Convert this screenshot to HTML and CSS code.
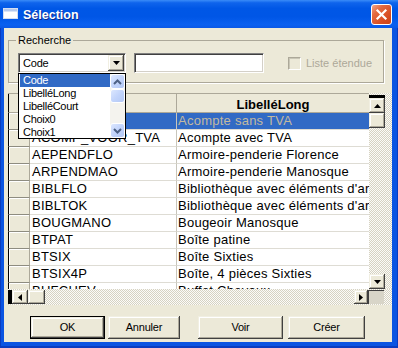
FILE: index.html
```html
<!DOCTYPE html>
<html lang="fr">
<head>
<meta charset="utf-8">
<title>Sélection</title>
<link rel="stylesheet" href="styles.css">
</head>
<body>
<div class="window">
  <div class="titlebar">
    <svg class="app-icon" width="16" height="12" viewBox="0 0 16 12" aria-hidden="true">
      <rect x="0.5" y="0.5" width="14" height="10" fill="#ffffff" stroke="#d4def0"/>
      <rect x="1" y="1" width="13" height="2.5" fill="#b4c9ee"/>
    </svg>
    <span class="title">Sélection</span>
    <span class="close" aria-label="Fermer">
      <svg width="19" height="19" viewBox="0 0 19 19" aria-hidden="true"><path d="M5.5 5.5 L13.5 13.5 M13.5 5.5 L5.5 13.5" stroke="#fff" stroke-width="2.2" stroke-linecap="square"/></svg>
    </span>
  </div>
  <div class="client">
    <fieldset class="group">
      <legend>Recherche</legend>
      <div class="search-row">
        <div class="combo">
          <span class="combo-text">Code</span>
          <span class="combo-btn"><svg width="7" height="4" viewBox="0 0 7 4" aria-hidden="true"><path d="M0 0h7L3.5 4z" fill="#000"/></svg></span>
          <div class="dropdown">
            <ul class="options">
              <li class="sel">Code</li>
              <li>LibelléLong</li>
              <li>LibelléCourt</li>
              <li>Choix0</li>
              <li>Choix1</li>
            </ul>
            <div class="xp-scroll">
              <span class="xp-btn"><svg width="9" height="6" viewBox="0 0 9 6" aria-hidden="true"><path d="M1 5 L4.5 1.5 L8 5" stroke="#4d6185" stroke-width="2" fill="none"/></svg></span>
              <span class="xp-thumb"></span>
              <span class="xp-track"></span>
              <span class="xp-btn"><svg width="9" height="6" viewBox="0 0 9 6" aria-hidden="true"><path d="M1 1 L4.5 4.5 L8 1" stroke="#4d6185" stroke-width="2" fill="none"/></svg></span>
            </div>
          </div>
        </div>
        <div class="field"></div>
        <label class="check"><span class="box"></span>Liste étendue</label>
      </div>
    </fieldset>

    <div class="table-wrap">
      <div class="table">
        <div class="row head">
          <div class="rh"></div>
          <div class="hc">Code</div>
          <div class="hc">LibelléLong</div>
        </div>
        <div class="row sel"><div class="rh"></div><div class="c">ACOMPTE</div><div class="c c2">Acompte sans TVA</div></div>
        <div class="row"><div class="rh"></div><div class="c">ACOMP_VOOR_TVA</div><div class="c c2">Acompte avec TVA</div></div>
        <div class="row"><div class="rh"></div><div class="c">AEPENDFLO</div><div class="c c2">Armoire-penderie Florence</div></div>
        <div class="row"><div class="rh"></div><div class="c">ARPENDMAO</div><div class="c c2">Armoire-penderie Manosque</div></div>
        <div class="row"><div class="rh"></div><div class="c">BIBLFLO</div><div class="c c2">Bibliothèque avec éléments d'armoire</div></div>
        <div class="row"><div class="rh"></div><div class="c">BIBLTOK</div><div class="c c2">Bibliothèque avec éléments d'armoire</div></div>
        <div class="row"><div class="rh"></div><div class="c">BOUGMANO</div><div class="c c2">Bougeoir Manosque</div></div>
        <div class="row"><div class="rh"></div><div class="c">BTPAT</div><div class="c c2">Boîte patine</div></div>
        <div class="row"><div class="rh"></div><div class="c">BTSIX</div><div class="c c2">Boîte Sixties</div></div>
        <div class="row"><div class="rh"></div><div class="c">BTSIX4P</div><div class="c c2">Boîte, 4 pièces Sixties</div></div>
        <div class="row"><div class="rh"></div><div class="c">BUFCHEV</div><div class="c c2">Buffet Chevaux</div></div>
      </div>
      <div class="vscroll">
        <span class="vcap"></span>
        <span class="sb"><svg width="7" height="4" viewBox="0 0 7 4" aria-hidden="true"><path d="M0 4h7L3.5 0z" fill="#000"/></svg></span>
        <span class="sb"></span>
        <span class="vtrack"></span>
        <span class="sb"><svg width="7" height="4" viewBox="0 0 7 4" aria-hidden="true"><path d="M0 0h7L3.5 4z" fill="#000"/></svg></span>
      </div>
      <div class="hscroll">
        <span class="hcap"></span>
        <span class="sb hb"><svg width="4" height="7" viewBox="0 0 4 7" aria-hidden="true"><path d="M4 0v7L0 3.5z" fill="#000"/></svg></span>
        <span class="sb hthumb"></span>
        <span class="htrack"></span>
        <span class="sb hb hr"><svg width="4" height="7" viewBox="0 0 4 7" aria-hidden="true"><path d="M0 0v7L4 3.5z" fill="#000"/></svg></span>
        <span class="corner"></span>
        <span class="filler"></span>
      </div>
    </div>

    <div class="buttons">
      <span class="btn default w-ok">OK</span>
      <span class="btn w-annuler">Annuler</span>
      <span class="btn w-voir">Voir</span>
      <span class="btn w-creer">Créer</span>
    </div>
  </div>
</div>
</body>
</html>
```

FILE: styles.css
```css
* { box-sizing: border-box; }
html, body { margin: 0; padding: 0; background: #fff; }
body { font-family: "Liberation Sans", Arial, sans-serif; color: #000; }

.window {
  width: 398px;
  height: 348px;
  display: flex;
  flex-direction: column;
  background: #0a54e2;
  box-shadow: inset 0 -2px 0 #0a3cc0, inset -1px 0 0 #0a3cc0, inset 1px 0 0 #0a3cc0;
  overflow: hidden;
}

/* Title bar */
.titlebar {
  height: 28px;
  flex: none;
  display: flex;
  align-items: flex-start;
  padding: 0 6px 0 3px;
  background: linear-gradient(to bottom, #3a8cf8 0%, #0f64ec 10%, #0057e6 30%, #0056e6 60%, #0a60f0 88%, #0a58e6 100%);
}
.app-icon { margin-top: 8px; flex: none; }
.title {
  margin-left: 4px;
  margin-top: 8px;
  font-size: 12.5px;
  line-height: 15px;
  font-weight: bold;
  color: #fff;
  text-shadow: 1px 1px 0 #0c2a8e;
}
.close {
  margin-left: auto;
  margin-top: 4px;
  width: 21px;
  height: 21px;
  border: 1px solid #fff;
  border-radius: 3px;
  background: linear-gradient(135deg, #f3a68a 0%, #e46a40 30%, #d84d22 70%, #cc4418 100%);
  display: flex;
  align-items: center;
  justify-content: center;
}

/* Client area */
.client {
  flex: 1;
  margin: 0 6px 6px 4px;
  padding-left: 4px;
  background: #ece9d8;
  display: flex;
  flex-direction: column;
  overflow: hidden;
}

/* Group box */
.group {
  margin: 6px 8px 0 0;
  padding: 0;
  min-width: 0;
  border: 1px solid #aca899;
  box-shadow: 1px 1px 0 #fff;
}
.group legend {
  margin-left: 7px;
  padding: 0 2px;
  font-size: 11px;
  line-height: 13px;
}
.search-row {
  display: flex;
  align-items: center;
  padding: 6px 9px 9px 9px;
}

.combo, .field {
  height: 20px;
  background: #fff;
  border: 1px solid;
  border-color: #808080 #fff #fff #808080;
  box-shadow: inset 1px 1px 0 #404040, inset -1px -1px 0 #d4d0c8;
}
.combo {
  position: relative;
  width: 108px;
  display: flex;
  padding: 1px;
}
.combo-text {
  flex: 1;
  padding-left: 3px;
  font-size: 11px;
  line-height: 16px;
  letter-spacing: -0.2px;
}
.combo-btn {
  width: 16px;
  height: 16px;
  display: flex;
  align-items: center;
  justify-content: center;
  background: #ece9d8;
  box-shadow: inset -1px -1px 0 #404040, inset 1px 1px 0 #f1efe2, inset -2px -2px 0 #aca899, inset 2px 2px 0 #fff;
}
.field {
  width: 130px;
  margin-left: 8px;
}
.check {
  display: flex;
  align-items: center;
  margin-left: 24px;
  font-size: 11px;
  line-height: 13px;
  color: #aca899;
}
.check .box {
  width: 13px;
  height: 13px;
  margin-right: 5px;
  background: #ece9d8;
  border: 1px solid;
  border-color: #aca899 #fff #fff #aca899;
  box-shadow: inset 1px 1px 0 #c9c6b6;
}

/* Dropdown list */
.dropdown {
  position: absolute;
  top: 19px;
  left: -1px;
  width: 108px;
  height: 66px;
  border: 1px solid #000;
  background: #fff;
  display: flex;
  z-index: 5;
}
.options {
  list-style: none;
  margin: 0;
  padding: 0 0 0 1px;
  flex: 1;
  overflow: hidden;
}
.options li {
  height: 13px;
  line-height: 13px;
  padding-left: 3px;
  font-size: 11px;
  letter-spacing: -0.3px;
  white-space: nowrap;
}
.options li.sel { background: #316ac5; color: #fff; }
.xp-scroll {
  width: 15px;
  display: flex;
  flex-direction: column;
  background: #f4f3ee;
}
.xp-btn, .xp-thumb {
  height: 15px;
  flex: none;
  border: 1px solid #fff;
  border-radius: 3px;
  background: linear-gradient(135deg, #dce7fe 0%, #c2d4fb 50%, #b3c8f5 100%);
  display: flex;
  align-items: center;
  justify-content: center;
}
.xp-thumb { height: 14px; }
.xp-track { flex: 1; }

/* Table */
.table-wrap {
  margin-top: 10px;
  height: 212px;
  display: grid;
  grid-template-columns: 361px 23px;
  grid-template-rows: 196px 16px;
}
.table {
  overflow: hidden;
  background: #fff;
  border-top: 1px solid #aca899;
}
.row {
  display: grid;
  grid-template-columns: 22px 146px 193px;
  height: 17px;
}
.row.head { height: 19px; }
.rh {
  background: #ece9d8;
  border-left: 1px solid #000;
  border-right: 1px solid #aca899;
  border-bottom: 1px solid #8e8c80;
  box-shadow: inset 1px 1px 0 #fff;
}
.head .rh { border-bottom-color: #aca899; box-shadow: none; }
.hc {
  background: #ece9d8;
  border-left: 1px solid #aca899;
  border-bottom: 1px solid #aca899;
  font-size: 13px;
  font-weight: bold;
  line-height: 15px;
  padding-top: 3px;
  text-align: center;
  overflow: hidden;
  white-space: nowrap;
}
.c {
  font-size: 13px;
  line-height: 16px;
  padding-left: 2px;
  border-bottom: 1px solid #dedcd4;
  white-space: nowrap;
  overflow: hidden;
  letter-spacing: 0.25px;
}
.c2 {
  border-left: 1px solid #c8c6bc;
  padding-left: 1px;
}
.row.sel .c { background: #316ac5; color: #c2b9a0; }

.vscroll, .hscroll {
  background-color: #fbfbf8;
  background-image: repeating-conic-gradient(#d6d2c2 0 25%, #fbfbf8 0 50%);
  background-size: 2px 2px;
}
.vscroll {
  display: flex;
  flex-direction: column;
  align-items: flex-start;
  padding-top: 2px;
}
.vcap { width: 16px; height: 3px; background: #000; flex: none; }
.sb {
  width: 16px;
  height: 15px;
  flex: none;
  display: flex;
  align-items: center;
  justify-content: center;
  background: #ece9d8;
  box-shadow: inset -1px -1px 0 #404040, inset 1px 1px 0 #f1efe2, inset -2px -2px 0 #aca899, inset 2px 2px 0 #fff;
}
.vtrack { flex: 1; }

.hscroll {
  grid-column: 1 / span 2;
  display: flex;
  align-items: flex-start;
  padding-top: 1px;
}
.hcap { width: 4px; height: 14px; background: #000; flex: none; }
.hb { height: 14px; }
.hthumb { width: 17px; height: 14px; }
.htrack { flex: 1; }
.hr { width: 14px; }
.corner {
  width: 16px;
  height: 14px;
  flex: none;
  background: #d8d5c8;
  border-top: 1px solid #404040;
  border-left: 1px solid #404040;
}
.filler { width: 8px; flex: none; }

/* Buttons */
.buttons {
  display: flex;
  margin-top: 11px;
  padding-left: 22px;
}
.btn {
  height: 23px;
  display: flex;
  align-items: center;
  justify-content: center;
  background: #ece9d8;
  font-size: 11px;
  line-height: 13px;
  letter-spacing: -0.2px;
  box-shadow: inset -1px -1px 0 #404040, inset 1px 1px 0 #f1efe2, inset -2px -2px 0 #aca899, inset 2px 2px 0 #fff;
}
.btn.default {
  border: 1px solid #000;
}
.w-ok { width: 75px; }
.w-annuler { width: 72px; margin-left: 3px; }
.w-voir { width: 85px; margin-left: 18px; }
.w-creer { width: 77px; margin-left: 5px; }
```
